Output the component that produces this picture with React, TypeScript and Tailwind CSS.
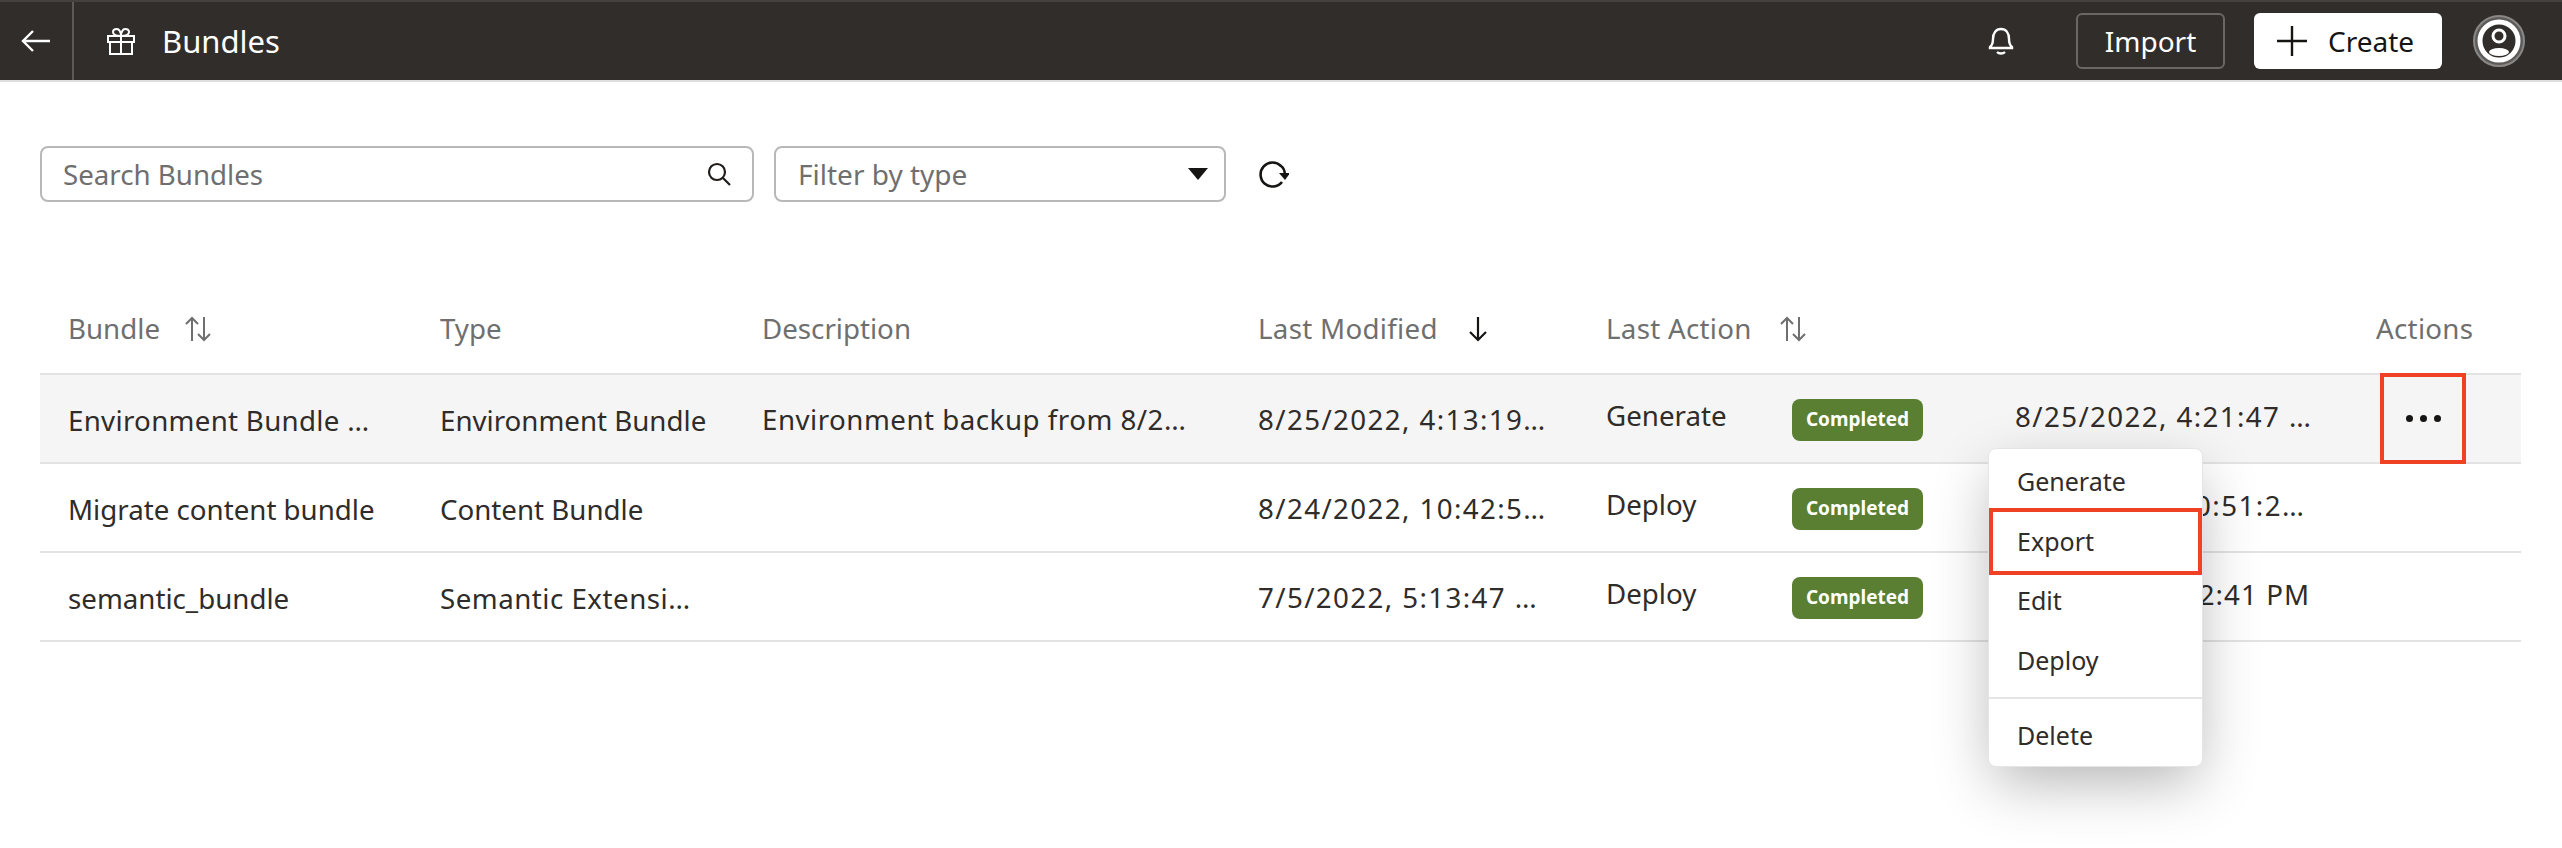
import React from "react";

const SortIcon = () => (
  <svg width="28" height="26" viewBox="0 0 28 26" fill="none" stroke="#6f6f6f" strokeWidth="2">
    <path d="M8 25V2M2 8l6-6 6 6" />
    <path d="M20 1v23M14 18l6 6 6-6" />
  </svg>
);

const Badge = () => (
  <span className="flex h-[42px] w-[131px] items-center justify-center rounded-[8px] bg-[#5a7f32] text-[19px] font-bold text-white">
    Completed
  </span>
);

const cols = "grid grid-cols-[372px_322px_496px_348px_186px_223px_361px_1fr] pl-[28px]";

const rows = [
  { name: "Environment Bundle …", nameCls: "tracking-[0.3px]", type: "Environment Bundle", typeCls: "", desc: "Environment backup from 8/2…", mod: "8/25/2022, 4:13:19…", act: "Generate", date: "8/25/2022, 4:21:47 …", dateCls: "tracking-[1.4px]", bg: "bg-[#f5f5f5]", dots: true },
  { name: "Migrate content bundle", nameCls: "", type: "Content Bundle", typeCls: "", desc: "", mod: "8/24/2022, 10:42:5…", act: "Deploy", date: "8/24/2022, 10:51:2…", dateCls: "tracking-[1.5px]", bg: "bg-white", dots: false },
  { name: "semantic_bundle", nameCls: "", type: "Semantic Extensi…", typeCls: "tracking-[0.5px]", desc: "", mod: "7/5/2022, 5:13:47 …", act: "Deploy", date: "7/5/2022, 5:22:41 PM", dateCls: "tracking-[1.1px]", bg: "bg-white", dots: false },
];

const MenuItem = ({ label, boxed }: { label: string; boxed?: boolean }) => (
  <div className={boxed
    ? "flex h-[67px] items-center border-[4px] border-[#ef4123] pl-[24px] -my-[4px]"
    : "flex h-[60px] items-center pl-[28px]"}>
    {label}
  </div>
);

export default function App() {
  return (
    <div className="relative h-[848px] w-[2562px] overflow-hidden bg-white font-['Noto_Sans',sans-serif] text-[27.7px] text-[#2f2c29]">
      <header className="flex h-[82px] items-center border-t-[2px] border-b-[2px] border-t-[#444241] border-b-[#dedede] bg-[#312d2a] text-white">
        <div className="flex h-full w-[74px] items-center justify-center border-r-[2px] border-[#5c5a58]">
          <svg width="30" height="22" viewBox="0 0 30 22" fill="none" stroke="white" strokeWidth="2.4">
            <path d="M29 11H2M12 1L2 11l10 10" />
          </svg>
        </div>
        <svg className="ml-[33px]" width="28" height="27" viewBox="0 0 28 27" fill="none" stroke="white" strokeWidth="2">
          <path d="M1 8h26v6H1zM3 14h22v12H3zM14 8v18" />
          <path d="M14 8C8 8 6 6 6 4s2-3 4-3 4 3 4 7c0-4 2-7 4-7s4 1 4 3-2 4-8 4z" />
        </svg>
        <span className="ml-[27px] text-[31px]">Bundles</span>
        <div className="ml-auto flex items-center">
          <svg width="26" height="28" viewBox="0 0 26 28" fill="none" stroke="white" strokeWidth="2.4">
            <path d="M2 20c2-1.500 3-3 3-8 0-6 3-10 8-10s8 4 8 10c0 5 1 6.500 3 8v1H2z" />
            <path d="M9 25c2 2 6 2 8 0" />
          </svg>
          <button className="ml-[62px] h-[56px] w-[149px] rounded-[6px] border-[2px] border-[#6b6864] text-[28px]">Import</button>
          <button className="ml-[29px] flex h-[56px] w-[188px] items-center rounded-[6px] bg-white pl-[23px] text-[28px] text-[#161513]">
            <svg width="30" height="30" viewBox="0 0 30 30" fill="none" stroke="#161513" strokeWidth="2.4">
              <path d="M15 0v30M0 15h30" />
            </svg>
            <span className="ml-[21px]">Create</span>
          </button>
          <div className="mr-[37px] ml-[31px] flex h-[52px] w-[52px] items-center justify-center rounded-full border-[2px] border-[#8a8886] bg-[#5e5c5a]">
            <svg width="44" height="44" viewBox="0 0 44 44" fill="none">
              <circle cx="22" cy="22" r="19" fill="#312d2a" stroke="white" strokeWidth="5" />
              <circle cx="22" cy="17" r="6" stroke="white" strokeWidth="3" />
              <ellipse cx="22" cy="33" rx="10" ry="4" fill="white" />
            </svg>
          </div>
        </div>
      </header>

      <div className="mt-[64px] flex items-center pl-[40px]">
        <div className="flex h-[56px] w-[714px] items-center justify-between rounded-[8px] border-[2px] border-[#b8b8b8] pr-[21px] pl-[21px] text-[#6f6f6f]">
          <span className="pt-[1px]">Search Bundles</span>
          <svg width="24" height="24" viewBox="0 0 24 24" fill="none" stroke="#1f1c1a" strokeWidth="2.2">
            <circle cx="10" cy="10" r="8" />
            <path d="M16 16l7 7" />
          </svg>
        </div>
        <div className="ml-[20px] flex h-[56px] w-[452px] items-center justify-between rounded-[8px] border-[2px] border-[#b8b8b8] pr-[16px] pl-[22px] text-[28px] text-[#6f6f6f]">
          <span>Filter by type</span>
          <svg width="20" height="12" viewBox="0 0 20 12"><path d="M0 0h20L10 12z" fill="#161513" /></svg>
        </div>
        <svg className="ml-[33px]" width="30" height="28" viewBox="0 0 30 28" fill="none" stroke="#161513" strokeWidth="2.6">
          <path d="M23 22a12 12 0 1 1-1-16c3 2 4 6 4 10" />
          <path d="M20 13h11l-5 7z" fill="#161513" stroke="none" />
        </svg>
      </div>

      <div className="mt-[86px] mr-[41px] ml-[40px]">
        <div className={`${cols} h-[85px] items-center pb-[3px] text-[#6f6f6f]`}>
          <div className="flex items-center gap-[24px]">Bundle <SortIcon /></div>
          <div>Type</div>
          <div>Description</div>
          <div className="flex items-center gap-[30px] tracking-[0.3px]">Last Modified
            <svg width="20" height="26" viewBox="0 0 20 26" fill="none" stroke="#161513" strokeWidth="2.2"><path d="M10 1v23M2 16l8 8 8-8" /></svg>
          </div>
          <div className="col-span-2 flex items-center gap-[27px] tracking-[0.3px]">Last Action <SortIcon /></div>
          <div className="col-start-8 tracking-[0.3px]">Actions</div>
        </div>
        <div className="border-t-[2px] border-[#e3e3e3]">
          {rows.map((r) => (
            <div key={r.name} className={`${cols} ${r.bg} h-[89px] items-center border-b-[2px] border-[#e3e3e3]`}>
              <div className={`pt-[5px] whitespace-nowrap ${r.nameCls}`}>{r.name}</div>
              <div className={`pt-[5px] whitespace-nowrap ${r.typeCls}`}>{r.type}</div>
              <div className="pt-[2px] tracking-[0.5px] whitespace-nowrap">{r.desc}</div>
              <div className="pt-[2px] tracking-[1.4px] whitespace-nowrap">{r.mod}</div>
              <div className="pb-[5px]">{r.act}</div>
              <div className="pt-[2px]"><Badge /></div>
              <div className={`pb-[4px] whitespace-nowrap ${r.dateCls}`}>{r.date}</div>
              <div className="flex items-center gap-[7px] pl-[30px]">
                {r.dots && (<>
                  <span className="h-[7px] w-[7px] rounded-full bg-[#161513]" />
                  <span className="h-[7px] w-[7px] rounded-full bg-[#161513]" />
                  <span className="h-[7px] w-[7px] rounded-full bg-[#161513]" />
                </>)}
              </div>
            </div>
          ))}
        </div>
      </div>

      <div className="absolute top-[373px] left-[2380px] h-[91px] w-[86px] border-[4px] border-[#ef4123]" />

      <div className="absolute top-[448px] left-[1988px] w-[215px] rounded-[8px] border border-[#e5e5e5] bg-white pt-[3px] text-[25px] shadow-[0_20px_60px_-6px_rgba(0,0,0,0.3)]">
        <MenuItem label="Generate" />
        <MenuItem label="Export" boxed />
        <MenuItem label="Edit" />
        <MenuItem label="Deploy" />
        <div className="mt-[6px] mb-[7px] border-t-[2px] border-[#e5e5e5]" />
        <MenuItem label="Delete" />
      </div>
    </div>
  );
}
